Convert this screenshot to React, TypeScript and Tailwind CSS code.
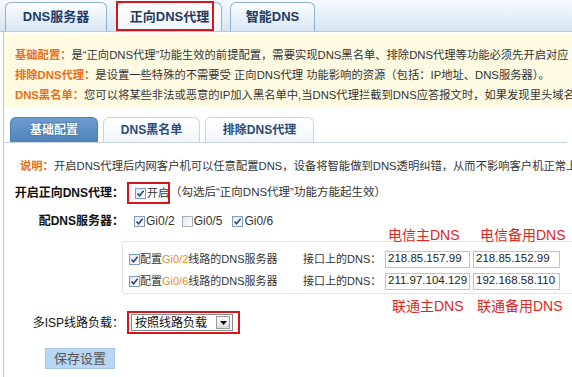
import React from "react";

const FONT = '"Liberation Sans", "Noto Sans CJK SC", sans-serif';

const Check = ({ on = true }: { on?: boolean }) => (
    <span
        className={`inline-flex h-[11px] w-[11px] shrink-0 items-center justify-center border ${
            on
                ? "border-[#7f9dc3] bg-gradient-to-br from-[#dfe8f3] to-white"
                : "border-[#a3afbc] bg-gradient-to-br from-[#e4e7ea] to-white"
        }`}
    >
        {on && (
            <svg width="9" height="9" viewBox="0 0 9 9">
                <path
                    d="M1.5 4.5 L3.6 6.8 L7.6 1.8"
                    fill="none"
                    stroke="#2a4070"
                    strokeWidth="1.5"
                />
            </svg>
        )}
    </span>
);

const TopTab = ({
    label,
    width,
    active,
}: {
    label: string;
    width: string;
    active?: boolean;
}) => (
    <div
        className={`relative flex h-[29px] items-center justify-center rounded-t-[6px] border border-b-0 border-[#93b1ce] text-[13px] font-bold text-[#1d3a66] ${width} ${
            active
                ? "bg-gradient-to-b from-white to-[#eef5fb]"
                : "bg-gradient-to-b from-[#fbfdff] to-[#d8e7f5]"
        }`}
    >
        {label}
        {active && (
            <span className="absolute -top-[2px] -left-[2px] h-[30px] w-[98px] border-2 border-[#d8141c]" />
        )}
    </div>
);

const InnerTab = ({
    label,
    width,
    active,
}: {
    label: string;
    width: string;
    active?: boolean;
}) => (
    <div
        className={`flex h-[25px] items-center justify-center rounded-t-[6px] border border-b-0 text-[12px] font-bold ${width} ${
            active
                ? "border-[#4d7fb3] bg-gradient-to-b from-[#6d9dcf] to-[#4f83ba] text-white [text-shadow:0_0_2px_#1d4d80]"
                : "border-[#c9d7e5] bg-gradient-to-b from-white to-[#f1f6fb] text-[#2b4a78]"
        }`}
    >
        {label}
    </div>
);

const notes = [
    {
        k: "基础配置：",
        v: "是“正向DNS代理”功能生效的前提配置，需要实现DNS黑名单、排除DNS代理等功能必须先开启对应",
    },
    {
        k: "排除DNS代理：",
        v: "是设置一些特殊的不需要受 正向DNS代理 功能影响的资源（包括：IP地址、DNS服务器）。",
    },
    {
        k: "DNS黑名单：",
        v: "您可以将某些非法或恶意的IP加入黑名单中,当DNS代理拦截到DNS应答报文时，如果发现里头域名",
    },
];

const lines = [
    { port: "Gi0/2", dns: ["218.85.157.99", "218.85.152.99"] },
    { port: "Gi0/6", dns: ["211.97.104.129", "192.168.58.110"] },
];

export default function App() {
    return (
        <div
            className="relative h-[377px] w-[572px] overflow-hidden bg-white text-[#333]"
            style={{ fontFamily: FONT }}
        >
            {/* top tabs */}
            <div className="flex h-[32px] items-end border-b border-[#b7cadd] bg-gradient-to-b from-[#f6faff] to-[#d7e6f4] pl-[5px]">
                <TopTab label="DNS服务器" width="w-[102px]" />
                <div className="ml-[10px]">
                    <TopTab label="正向DNS代理" width="w-[105px]" active />
                </div>
                <div className="ml-[8px]">
                    <TopTab label="智能DNS" width="w-[85px]" />
                </div>
            </div>

            <div className="ml-[3px] flex h-[345px] flex-col border-l border-[#c9c9c9]">
                {/* notice */}
                <div className="mt-[2px] h-[73px] bg-[#fffbe3] pt-[11px] pl-[11px] text-[11.3px] leading-[20px] whitespace-nowrap">
                    {notes.map((n) => (
                        <div key={n.k}>
                            <span className="font-bold text-[#ea6e12]">{n.k}</span>
                            <span>{n.v}</span>
                        </div>
                    ))}
                </div>

                {/* inner tabs */}
                <div className="mt-[10px] mr-[5px] flex items-end gap-[5px] border-b border-[#c8d4e0] pl-[6px]">
                    <InnerTab label="基础配置" width="w-[88px]" active />
                    <InnerTab label="DNS黑名单" width="w-[97px]" />
                    <InnerTab label="排除DNS代理" width="w-[109px]" />
                </div>

                {/* description */}
                <div className="mt-[13px] h-[20px] pl-[16px] text-[11.3px] leading-[20px] whitespace-nowrap">
                    <span className="font-bold text-[#ea6e12]">说明：</span>
                    开启DNS代理后内网客户机可以任意配置DNS，设备将智能做到DNS透明纠错，从而不影响客户机正常上
                </div>

                {/* enable row */}
                <div className="mt-[6px] flex h-[22px] items-center text-[12px] whitespace-nowrap">
                    <div className="w-[120px] text-right font-bold text-[#111]">开启正向DNS代理：</div>
                    <div className="ml-[3px] flex h-[22px] w-[43px] items-center gap-[1px] border-2 border-[#d8141c] pl-[6px] text-[11px]">
                        <Check />
                        开启
                    </div>
                    <span className="text-[11.5px]">（勾选后“正向DNS代理”功能方能起生效）</span>
                </div>

                {/* server row */}
                <div className="mt-[7px] flex h-[20px] items-center text-[12px] whitespace-nowrap">
                    <div className="w-[120px] text-right font-bold text-[#111]">配DNS服务器：</div>
                    <div className="ml-[10px] flex items-center gap-[1px]">
                        <Check />
                        Gi0/2
                    </div>
                    <div className="ml-[7px] flex items-center gap-[1px]">
                        <Check on={false} />
                        Gi0/5
                    </div>
                    <div className="ml-[10px] flex items-center gap-[1px]">
                        <Check />
                        Gi0/6
                    </div>
                </div>

                {/* line dns box */}
                <div className="mt-[10px] ml-[118px] flex h-[53px] flex-col gap-[2px] rounded-l-[3px] border border-r-0 border-[#e4e4e4] pt-[7px] pl-[6px] text-[11px] whitespace-nowrap">
                    {lines.map((l) => (
                        <div key={l.port} className="flex h-[20px] items-center">
                            <Check />
                            <span className="w-[163px]">
                                配置<span className="text-[#ef8a22]">{l.port}</span>线路的DNS服务器
                            </span>
                            <span className="w-[82px]">接口上的DNS：</span>
                            <div className="flex h-[17px] w-[85px] items-center border border-[#c4c4c4] pl-[2px] text-[11.5px] text-[#222]">
                                {l.dns[0]}
                            </div>
                            <div className="ml-[3px] flex h-[17px] w-[87px] items-center border border-[#c4c4c4] pl-[2px] text-[11.5px] text-[#222]">
                                {l.dns[1]}
                            </div>
                        </div>
                    ))}
                </div>

                {/* isp row */}
                <div className="mt-[17px] flex h-[23px] items-center text-[12px] whitespace-nowrap">
                    <div className="w-[120px] text-right text-[#111]">多ISP线路负载：</div>
                    <div className="ml-[3px] flex h-[23px] w-[113px] items-center border-2 border-[#d8141c] pl-[2px]">
                        <div className="flex h-[17px] w-[102px] items-center justify-between border border-[#8a8a8a] bg-white pr-[2px] pl-[3px] text-[12px] text-[#111]">
                            按照线路负载
                            <span className="flex h-[13px] w-[14px] items-center justify-center border border-[#9a9a9a] bg-gradient-to-b from-white to-[#dcdcdc]">
                                <svg width="7" height="4" viewBox="0 0 7 4">
                                    <path d="M0 0 H7 L3.5 4 Z" fill="#111" />
                                </svg>
                            </span>
                        </div>
                    </div>
                </div>

                {/* save */}
                <button className="mt-[14px] ml-[41px] flex h-[21px] w-[70px] items-center justify-center border border-[#a6c8e8] bg-[#b7d7f5] text-[13px] text-[#555]">
                    保存设置
                </button>
            </div>

            {/* red annotations */}
            <span className="absolute top-[226px] left-[388px] text-[14px] leading-[18px] text-[#e0241e]">
                电信主DNS
            </span>
            <span className="absolute top-[226px] left-[480px] text-[14px] leading-[18px] text-[#e0241e]">
                电信备用DNS
            </span>
            <span className="absolute top-[297px] left-[392px] text-[14px] leading-[18px] text-[#e0241e]">
                联通主DNS
            </span>
            <span className="absolute top-[297px] left-[477px] text-[14px] leading-[18px] text-[#e0241e]">
                联通备用DNS
            </span>
        </div>
    );
}
